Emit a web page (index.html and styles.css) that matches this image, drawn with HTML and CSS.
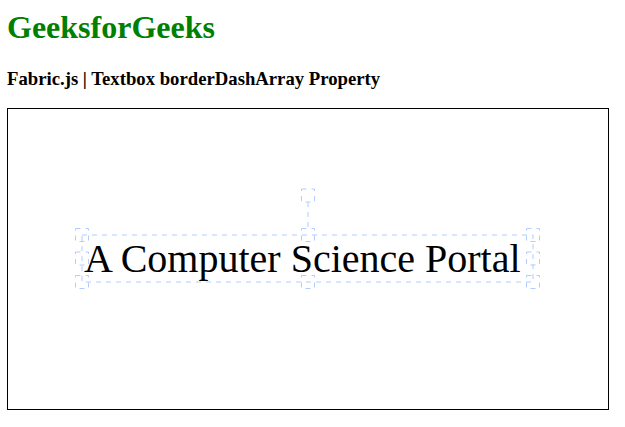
FILE: index.html
```html
<!DOCTYPE html>
<html>
<head>
<meta charset="utf-8">
<title>Fabric.js | Textbox borderDashArray Property</title>
<link rel="stylesheet" href="styles.css">
</head>
<body>
  <h1 class="brand">GeeksforGeeks</h1>
  <h3 class="subtitle">Fabric.js | Textbox borderDashArray Property</h3>
  <div class="canvas-container">
    <svg class="stage" width="600" height="300" viewBox="0 0 600 300">
      <text class="tb-text" x="76" y="163">A Computer Science Portal</text>
      <g class="selection">
        <rect x="74" y="126" width="451" height="47"/>
        <line x1="300" y1="93" x2="300" y2="120"/>
        <rect x="67.5" y="119.5" width="13" height="13"/>
        <rect x="293.5" y="119.5" width="13" height="13"/>
        <rect x="518.5" y="119.5" width="13" height="13"/>
        <rect x="67.5" y="143" width="13" height="13"/>
        <rect x="518.5" y="143" width="13" height="13"/>
        <rect x="67.5" y="166.5" width="13" height="13"/>
        <rect x="293.5" y="166.5" width="13" height="13"/>
        <rect x="518.5" y="166.5" width="13" height="13"/>
        <rect x="293.5" y="80" width="13" height="13"/>
      </g>
    </svg>
  </div>
</body>
</html>
```
FILE: styles.css
```css
html, body {
  background: #fff;
}
body {
  margin: 0;
  padding: 0 0 0 7px;
  font-family: "Liberation Serif", "Times New Roman", serif;
  color: #000;
}
.brand {
  color: #008000;
  font-size: 32px;
  font-weight: bold;
  margin: 9px 0 0;
}
.subtitle {
  font-size: 18.72px;
  font-weight: bold;
  margin: 22px 0 17.5px;
}
.canvas-container {
  width: 600px;
  height: 300px;
  border: 1px solid #000;
}
.stage {
  display: block;
}
.tb-text {
  font-family: "Liberation Serif", "Times New Roman", serif;
  font-size: 40px;
  fill: #000;
}
.selection {
  fill: none;
  stroke: rgb(178, 204, 255);
  stroke-width: 1;
  stroke-dasharray: 5 5;
}
```
